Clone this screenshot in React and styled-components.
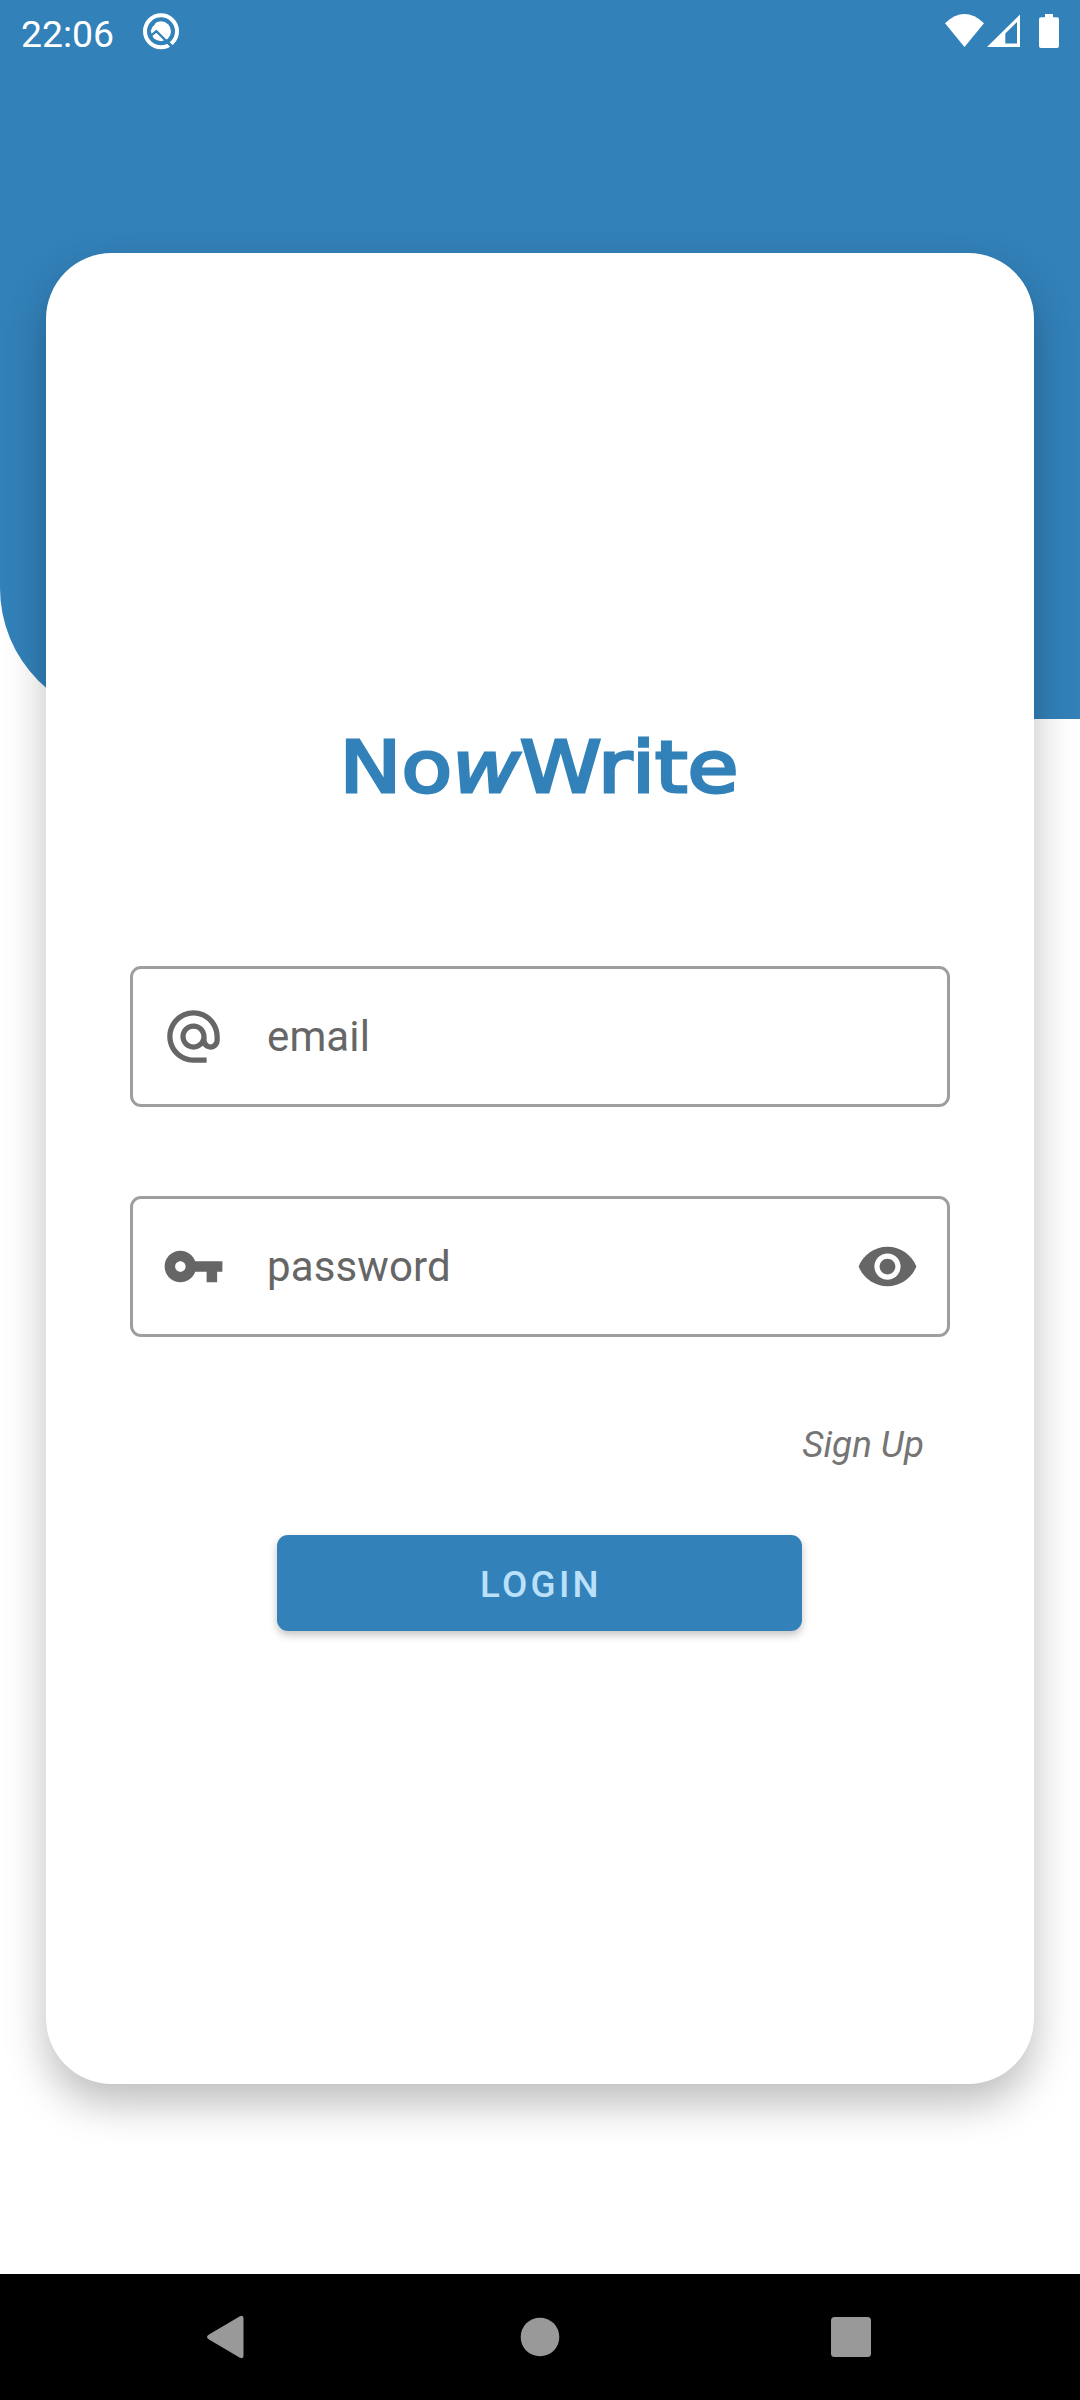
import React from "react";
import styled, { createGlobalStyle } from "styled-components";

const BLUE = "#3281b9";

const GlobalStyle = createGlobalStyle`
  * { box-sizing: border-box; }
  body {
    margin: 0;
    background: #fff;
    font-family: Roboto, "Liberation Sans", sans-serif;
  }
`;

const Screen = styled.div`
  width: 1080px;
  height: 2400px;
  display: grid;
  grid-template: 2274px 126px / 1080px;
  overflow: hidden;
  background: #fff;
`;

const Backdrop = styled.div`
  grid-area: 1 / 1;
  height: 719px;
  background: ${BLUE};
  border-bottom-left-radius: 131px;
`;

const Content = styled.div`
  grid-area: 1 / 1;
  display: flex;
  flex-direction: column;
`;

const StatusBar = styled.header`
  height: 63px;
  padding: 0 20px 0 21px;
  display: flex;
  align-items: center;
  color: #fff;
`;

const Clock = styled.span`
  font-size: 37.4px;
  line-height: 44px;
  margin-top: 4px;
  width: 121px;
`;

const StatusIcons = styled.div`
  margin-left: auto;
  display: flex;
  height: 63px;
`;

const Card = styled.main`
  width: 988px;
  height: 1831px;
  margin: 190px 46px 0;
  padding: 465px 84px 0;
  display: flex;
  flex-direction: column;
  border-radius: 66px;
  background: #fff;
  box-shadow: 0 20px 42px rgba(0, 0, 0, 0.26);
`;

const Brand = styled.h1`
  margin: 0 2px 0 0;
  height: 100px;
  display: flex;
  justify-content: center;
  font: 400 71px/100px "DejaVu Sans", sans-serif;
  color: ${BLUE};
  -webkit-text-stroke: 3px ${BLUE};
  transform: scaleX(1.166);
`;

const Slanted = styled.span`
  font-style: oblique;
`;

const Form = styled.form`
  margin-top: 148px;
  display: flex;
  flex-direction: column;
`;

const Field = styled.label`
  height: 141px;
  margin-bottom: 89px;
  padding: 0 28px 0 29px;
  display: flex;
  align-items: center;
  gap: 42px;
  border: 3px solid #9e9e9e;
  border-radius: 11px;
  color: #666;
`;

const FieldText = styled.span`
  flex: 1;
  font-size: 42px;
  line-height: 50px;
  letter-spacing: 0.12px;
`;

const FieldIcon = styled.svg`
  width: 63px;
  height: 63px;
  fill: currentColor;
`;

const SignUp = styled.a`
  align-self: flex-end;
  margin: -5px 26px 0 0;
  font-size: 36.75px;
  font-style: italic;
  line-height: 48px;
  color: #757575;
`;

const LoginButton = styled.button`
  align-self: center;
  width: 525px;
  height: 96px;
  margin: 66px 1px 0 0;
  padding: 4px 0 0 3px;
  border: 0;
  border-radius: 11px;
  background: ${BLUE};
  color: #bbe1fa;
  font: 500 36.75px/44px Roboto, sans-serif;
  letter-spacing: 3.28px;
  box-shadow: 0 4px 8px rgba(0, 0, 0, 0.24);
`;

const NavBar = styled.nav`
  grid-area: 2 / 1;
  display: flex;
  align-items: center;
  justify-content: space-between;
  padding: 0 197px;
  background: #000;
`;

const NavIcon = styled.svg`
  width: 64px;
  height: 64px;
  fill: #999;
`;

const AtIcon = () => (
  <FieldIcon viewBox="0 0 24 24">
    <path d="M12 2C6.48 2 2 6.48 2 12s4.48 10 10 10h5v-2h-5c-4.34 0-8-3.66-8-8s3.66-8 8-8 8 3.66 8 8v1.43c0 .79-.71 1.57-1.5 1.57s-1.5-.78-1.5-1.57V12c0-2.76-2.24-5-5-5s-5 2.24-5 5 2.24 5 5 5c1.38 0 2.64-.56 3.54-1.47.65.89 1.77 1.47 2.96 1.47 1.97 0 3.5-1.6 3.5-3.57V12c0-5.52-4.48-10-10-10zm0 13c-1.66 0-3-1.34-3-3s1.34-3 3-3 3 1.34 3 3-1.34 3-3 3z" />
  </FieldIcon>
);

const KeyIcon = () => (
  <FieldIcon viewBox="0 0 24 24">
    <path d="M12.65 10C11.83 7.67 9.61 6 7 6c-3.31 0-6 2.69-6 6s2.69 6 6 6c2.61 0 4.83-1.67 5.65-4H17v4h4v-4h2v-4H12.65zM7 14c-1.1 0-2-.9-2-2s.9-2 2-2 2 .9 2 2-.9 2-2 2z" />
  </FieldIcon>
);

const EyeIcon = () => (
  <FieldIcon viewBox="0 0 24 24">
    <path d="M12 4.5C7 4.5 2.73 7.61 1 12c1.73 4.39 6 7.5 11 7.5s9.27-3.11 11-7.5c-1.73-4.39-6-7.5-11-7.5zM12 17c-2.76 0-5-2.24-5-5s2.24-5 5-5 5 2.24 5 5-2.24 5-5 5zm0-8c-1.66 0-3 1.34-3 3s1.34 3 3 3 3-1.34 3-3-1.34-3-3-3z" />
  </FieldIcon>
);

const AppBadge = () => (
  <svg width="38" height="63" viewBox="142 0 38 63" fill="none">
    <circle cx="161" cy="31.300" r="16" stroke="#fff" strokeWidth="4" />
    <circle cx="161" cy="31.300" r="10" fill="#fff" />
    <path d="M149 37L156.500 31L172 46.500" stroke={BLUE} strokeWidth="2.600" />
    <path d="M149.500 28.500L154.500 23" stroke={BLUE} strokeWidth="2.500" />
    <path d="M151.500 32L156.500 27.500L167.500 38.500" stroke="#fff" strokeWidth="3" />
    <path d="M167 41.500L174 49" stroke={BLUE} strokeWidth="2.500" />
  </svg>
);

const SystemIcons = () => (
  <svg width="120" height="63" viewBox="940 0 120 63" fill="#fff">
    <path d="M945 23.2Q964.5 5 984 23.2L964.5 47Z" />
    <path fillRule="evenodd" d="M987 47L1020 14.5V47ZM1005.3 33.5V43.5H1017V22Z" />
    <path d="M1045 14h8v3.3h4q2 0 2 2V46q0 2-2 2h-16q-2 0-2-2V19.300q0-2 2-2h4Z" />
  </svg>
);

export default function App() {
  return (
    <>
      <GlobalStyle />
      <Screen>
        <Backdrop />
        <Content>
          <StatusBar>
            <Clock>22:06</Clock>
            <AppBadge />
            <StatusIcons>
              <SystemIcons />
            </StatusIcons>
          </StatusBar>
          <Card>
            <Brand>
              No<Slanted>w</Slanted>Write
            </Brand>
            <Form>
              <Field>
                <AtIcon />
                <FieldText>email</FieldText>
              </Field>
              <Field>
                <KeyIcon />
                <FieldText>password</FieldText>
                <EyeIcon />
              </Field>
              <SignUp>Sign Up</SignUp>
              <LoginButton type="button">LOGIN</LoginButton>
            </Form>
          </Card>
        </Content>
        <NavBar>
          <NavIcon viewBox="0 0 64 64">
            <path d="M12 29.500L42.500 11.500Q46.500 9.500 46.500 13.500V50.500Q46.500 54.500 42.500 52.500L12 34.500Q8 32 12 29.500Z" />
          </NavIcon>
          <NavIcon viewBox="0 0 64 64">
            <circle cx="32" cy="32" r="19.300" />
          </NavIcon>
          <NavIcon viewBox="0 0 64 64">
            <rect x="12" y="12" width="40" height="40" rx="3.500" />
          </NavIcon>
        </NavBar>
      </Screen>
    </>
  );
}
